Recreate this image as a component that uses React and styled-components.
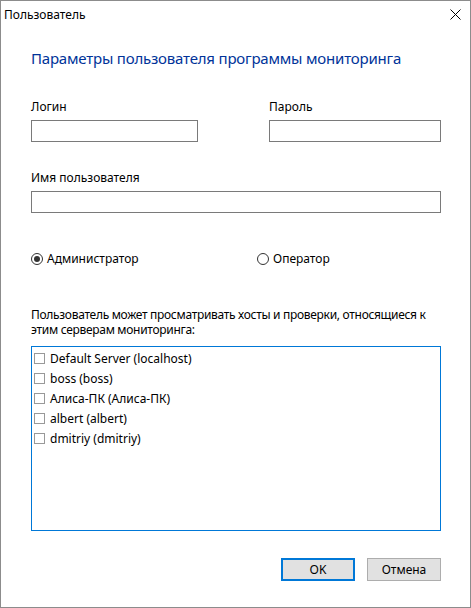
import { createGlobalStyle } from "styled-components";
import styled from "styled-components";

const GlobalStyle = createGlobalStyle`
  html, body {
    margin: 0;
    padding: 0;
    background: #ffffff;
  }
  body {
    font-family: "Noto Sans", "Open Sans", sans-serif;
    font-size: 12px;
    color: #000000;
  }
`;

const servers = [
  "Default Server (localhost)",
  "boss (boss)",
  "Алиса-ПК (Алиса-ПК)",
  "albert (albert)",
  "dmitriy (dmitriy)",
];

const Window = styled.div`
  width: 471px;
  height: 608px;
  box-sizing: border-box;
  border: 1px solid #8c8c8c;
  background: #ffffff;
  display: flex;
  flex-direction: column;
`;

const TitleBar = styled.div`
  height: 27px;
  display: flex;
  align-items: center;
  justify-content: space-between;
  padding: 0 0 0 3px;
`;

const Title = styled.span`
  font-size: 12px;
  line-height: 16px;
`;

const CloseButton = styled.div`
  width: 30px;
  height: 27px;
  display: flex;
  align-items: center;
  justify-content: center;
`;

const Content = styled.div`
  flex: 1;
  display: flex;
  flex-direction: column;
  padding: 0 29px 0 30px;
`;

const Heading = styled.h1`
  margin: 20px 0 0;
  font-size: 15px;
  line-height: 20px;
  font-weight: 400;
  letter-spacing: -0.2px;
  color: #003399;
`;

const FieldRow = styled.div`
  display: flex;
  justify-content: space-between;
  margin-top: ${(p) => p.$top}px;
`;

const Field = styled.div`
  display: flex;
  flex-direction: column;
  width: ${(p) => (p.$width ? `${p.$width}px` : "100%")};
`;

const Label = styled.label`
  line-height: 16px;
  margin-bottom: 5px;
`;

const Input = styled.input`
  box-sizing: border-box;
  height: 22px;
  width: 100%;
  border: 1px solid #7a7a7a;
  background: #ffffff;
  margin: 0;
  padding: 0 4px;
  outline: none;
  font: inherit;
`;

const RadioRow = styled.div`
  display: flex;
  margin-top: 38px;
`;

const RadioOption = styled.label`
  display: flex;
  align-items: center;
  gap: 4px;
  width: ${(p) => p.$width}px;
  line-height: 16px;
`;

const RadioCircle = styled.span`
  width: 12px;
  height: 12px;
  box-sizing: border-box;
  border: 1px solid #333333;
  border-radius: 50%;
  display: flex;
  align-items: center;
  justify-content: center;
  &::after {
    content: "";
    width: 6px;
    height: 6px;
    border-radius: 50%;
    background: ${(p) => (p.$checked ? "#333333" : "transparent")};
  }
`;

const Paragraph = styled.p`
  margin: 40px 0 0;
  line-height: 15px;
  letter-spacing: -0.3px;
`;

const ListBox = styled.div`
  margin-top: 9px;
  height: 185px;
  box-sizing: border-box;
  border: 1px solid #0078d7;
  padding: 1px 0 0 2px;
  display: flex;
  flex-direction: column;
`;

const ListItem = styled.label`
  display: flex;
  align-items: center;
  gap: 5px;
  height: 20px;
`;

const CheckBox = styled.span`
  width: 11px;
  height: 11px;
  box-sizing: border-box;
  border: 1px solid #999999;
  background: #ffffff;
`;

const ButtonRow = styled.div`
  display: flex;
  justify-content: flex-end;
  gap: 12px;
  margin-top: 27px;
`;

const Button = styled.button`
  width: 74px;
  height: 23px;
  box-sizing: border-box;
  margin: 0;
  padding: 0;
  background: #e1e1e1;
  border: ${(p) => (p.$default ? "2px solid #0078d7" : "1px solid #adadad")};
  font: inherit;
  color: #000000;
`;

export default function App() {
  return (
    <>
      <GlobalStyle />
      <Window>
        <TitleBar>
          <Title>Пользователь</Title>
          <CloseButton>
            <svg width="11" height="11" viewBox="0 0 11 11">
              <path d="M0.5 0.5 L10.5 10.5 M10.5 0.5 L0.5 10.5" stroke="#000" strokeWidth="1" />
            </svg>
          </CloseButton>
        </TitleBar>
        <Content>
          <Heading>Параметры пользователя программы мониторинга</Heading>
          <FieldRow $top={31}>
            <Field $width={167}>
              <Label>Логин</Label>
              <Input />
            </Field>
            <Field $width={172}>
              <Label>Пароль</Label>
              <Input type="password" />
            </Field>
          </FieldRow>
          <FieldRow $top={28}>
            <Field>
              <Label>Имя пользователя</Label>
              <Input />
            </Field>
          </FieldRow>
          <RadioRow>
            <RadioOption $width={226}>
              <RadioCircle $checked />
              Администратор
            </RadioOption>
            <RadioOption $width={120}>
              <RadioCircle />
              Оператор
            </RadioOption>
          </RadioRow>
          <Paragraph>
            Пользователь может просматривать хосты и проверки, относящиеся к
            этим серверам мониторинга:
          </Paragraph>
          <ListBox>
            {servers.map((s) => (
              <ListItem key={s}>
                <CheckBox />
                {s}
              </ListItem>
            ))}
          </ListBox>
          <ButtonRow>
            <Button $default>OK</Button>
            <Button>Отмена</Button>
          </ButtonRow>
        </Content>
      </Window>
    </>
  );
}
